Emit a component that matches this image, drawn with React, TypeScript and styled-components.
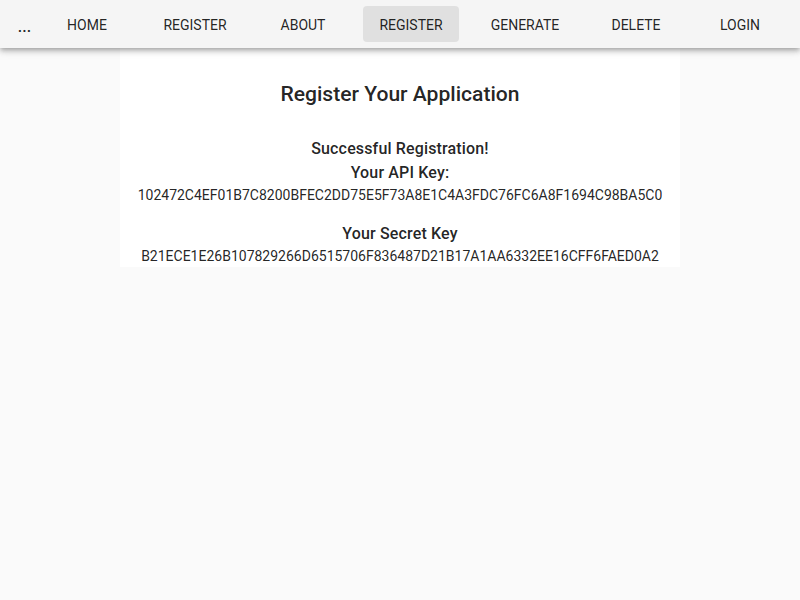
import React from "react";
import styled, { createGlobalStyle } from "styled-components";

const Global = createGlobalStyle`
  html, body { margin: 0; padding: 0; background: #fafafa; }
  body { font-family: Roboto, "Liberation Sans", sans-serif; color: rgba(0,0,0,0.87); }
`;

const AppBar = styled.header`
  height: 48px;
  background: #f5f5f5;
  box-shadow: 0px 2px 4px -1px rgba(0,0,0,0.2), 0px 4px 5px 0px rgba(0,0,0,0.14), 0px 1px 10px 0px rgba(0,0,0,0.12);
  display: flex;
  align-items: center;
  position: relative;
  z-index: 2;
`;

const MenuDots = styled.div`
  width: 49px;
  height: 48px;
  display: flex;
  align-items: center;
  justify-content: center;
  font-size: 16px;
  font-weight: 500;
  line-height: 1;
  padding-top: 5px;
  box-sizing: border-box;
  color: rgba(0,0,0,0.87);
`;

const NavList = styled.nav`
  display: flex;
  align-items: center;
  gap: 12px;
  margin-left: -10px;
`;

const NavButton = styled.button<{ $active?: boolean; $w: number }>`
  width: ${(p) => p.$w}px;
  height: 36px;
  border: none;
  border-radius: 4px;
  background: ${(p) => (p.$active ? "#e0e0e0" : "transparent")};
  font-family: Roboto, "Liberation Sans", sans-serif;
  font-size: 14px;
  font-weight: 400;
  letter-spacing: 0;
  text-transform: uppercase;
  color: rgba(0,0,0,0.87);
  padding: 2px 0 0;
  cursor: pointer;
`;

const Card = styled.main`
  width: 560px;
  margin: 0 auto;
  background: #fff;
  padding: 34px 0 1px;
  display: flex;
  flex-direction: column;
  align-items: center;
`;

const Title = styled.h2`
  margin: 0 0 31px;
  font-size: 21.1px;
  font-weight: 500;
  line-height: 24px;
  letter-spacing: 0;
`;

const Label = styled.div`
  font-size: 16px;
  font-weight: 500;
  line-height: 24px;
  letter-spacing: 0.0094em;
`;

const KeyText = styled.div<{ $gap?: number }>`
  font-size: 14px;
  line-height: 20px;
  letter-spacing: 0;
  margin-bottom: ${(p) => p.$gap ?? 0}px;
`;

const navItems = [
  { label: "Home", w: 96 },
  { label: "Register", w: 96 },
  { label: "About", w: 96 },
  { label: "Register", w: 96, active: true },
  { label: "Generate", w: 108 },
  { label: "Delete", w: 90 },
  { label: "Login", w: 94 },
];

export default function App() {
  return (
    <>
      <Global />
      <AppBar>
        <MenuDots>...</MenuDots>
        <NavList>
          {navItems.map((n, i) => (
            <NavButton key={i} $w={n.w} $active={n.active}>
              {n.label}
            </NavButton>
          ))}
        </NavList>
      </AppBar>
      <Card>
        <Title>Register Your Application</Title>
        <Label>Successful Registration!</Label>
        <Label>Your API Key:</Label>
        <KeyText $gap={17}>102472C4EF01B7C8200BFEC2DD75E5F73A8E1C4A3FDC76FC6A8F1694C98BA5C0</KeyText>
        <Label>Your Secret Key</Label>
        <KeyText>B21ECE1E26B107829266D6515706F836487D21B17A1AA6332EE16CFF6FAED0A2</KeyText>
      </Card>
    </>
  );
}
